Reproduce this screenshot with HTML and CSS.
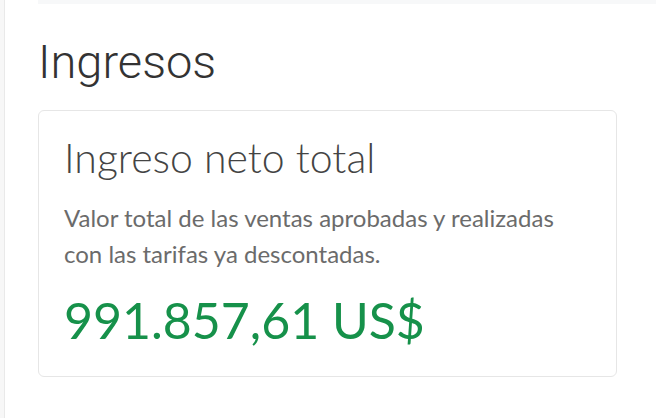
FILE: index.html
```html
<!DOCTYPE html>
<html lang="es">
<head>
  <meta charset="UTF-8">
  <meta name="viewport" content="width=device-width, initial-scale=1.0">
  <title>Ingresos</title>
  <link rel="stylesheet" href="styles.css">
</head>
<body>
  <div class="rail"></div>
  <main class="content">
    <div class="topbar"></div>
    <h1>Ingresos</h1>
    <section class="card">
      <h2 class="card-title">Ingreso neto total</h2>
      <p class="card-text">Valor total de las ventas aprobadas y realizadas con las tarifas ya descontadas.</p>
      <div class="amount">991.857,61 US$</div>
    </section>
  </main>
</body>
</html>
```

FILE: styles.css
```css
body {
  margin: 0;
  display: flex;
  min-height: 418px;
  background: #ffffff;
  font-family: Lato, "Noto Sans", sans-serif;
  color: #333;
}
.rail {
  width: 4px;
  background: #f7f7f7;
  border-right: 1px solid #e9e9e9;
}
.content {
  flex: 1;
  padding: 0 39px 0 33px;
}
.topbar {
  height: 4px;
  background: #f7f8f9;
  margin-right: -39px;
}
h1 {
  margin: 30px 0 20px;
  font-family: Roboto, sans-serif;
  font-weight: 300;
  font-size: 47px;
  line-height: 1.2;
  color: #333;
}
.card {
  border: 1px solid #e6e6e6;
  border-radius: 6px;
  padding: 22px 25px 26px;
}
.card-title {
  margin: 0;
  font-weight: 300;
  font-size: 41px;
  line-height: 1.2;
  color: #444;
}
.card-text {
  margin: 17px 0 0;
  font-size: 24px;
  line-height: 36px;
  color: #6b6b6b;
}
.amount {
  margin-top: 18px;
  font-size: 50px;
  line-height: 1.2;
  color: #16914a;
}
```
